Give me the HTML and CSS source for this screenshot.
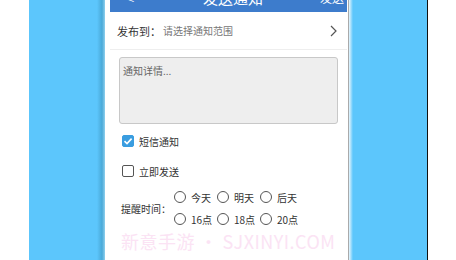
FILE: index.html
```html
<!DOCTYPE html>
<html lang="zh">
<head>
<meta charset="utf-8">
<link rel="stylesheet" href="styles.css">
</head>
<body>
<div class="stage">
  <div class="side-white"></div>
  <div class="band band-left"></div>
  <div class="phone">
    <div class="screen">
      <div class="header">
        <span class="back">&lt;</span>
        <span class="title">发送通知</span>
        <span class="send">发送</span>
      </div>
      <div class="row-to">
        <span class="label">发布到：</span>
        <span class="placeholder">请选择通知范围</span>
        <svg class="chev" width="7" height="12" viewBox="0 0 7 12"><path d="M1 1 L6 6 L1 11" fill="none" stroke="#555" stroke-width="1.2"/></svg>
      </div>
      <div class="body">
        <div class="textarea">通知详情...</div>
        <div class="check-row">
          <span class="cb checked"><svg width="12" height="12" viewBox="0 0 12 12"><path d="M2.5 6.2 L5 8.6 L9.6 3.6" fill="none" stroke="#fff" stroke-width="1.6"/></svg></span>
          <span class="cb-label">短信通知</span>
        </div>
        <div class="check-row second">
          <span class="cb"></span>
          <span class="cb-label">立即发送</span>
        </div>
        <div class="remind">
          <span class="remind-label">提醒时间：</span>
          <div class="radio-grid">
            <span class="radio"><i></i>今天</span>
            <span class="radio"><i></i>明天</span>
            <span class="radio"><i></i>后天</span>
            <span class="radio"><i></i>16点</span>
            <span class="radio"><i></i>18点</span>
            <span class="radio"><i></i>20点</span>
          </div>
        </div>
        <div class="watermark">新意手游 • SJXINYI.COM</div>
      </div>
    </div>
    <div class="edge"></div>
  </div>
  <div class="band band-right"></div>
  <div class="black-line"></div>
  <div class="side-white"></div>
</div>
</body>
</html>
```
FILE: styles.css
```css
html, body { margin: 0; padding: 0; background: #fff; }
body { width: 456px; height: 260px; overflow: hidden; font-family: "Noto Sans CJK SC", "Noto Sans", sans-serif; }
.stage { display: flex; height: 260px; }
.side-white { width: 29px; background: #fff; flex: none; }
.stage > .side-white:last-child { width: 27px; }
.band { background: #5cc6fc; flex: none; }
.band-left { width: 76px; background: linear-gradient(to right, #5cc6fc 0, #5cc6fc 68px, #4aa9d8 73px, #8fd0ee 76px); }
.band-right { width: 78px; background: linear-gradient(to right, #e8f6fd 0, #5cc6fc 4px, #5cc6fc 78px); }
.black-line { width: 1px; background: #111; flex: none; }
.phone { display: flex; flex: none; background: #fff; padding-left: 5px; }
.screen { width: 237px; display: flex; flex-direction: column; background: #fff; }
.edge { width: 1px; margin-left: 1px; background: #aaa; }
.header { height: 12px; overflow: hidden; background: #3d7ccc; display: flex; justify-content: space-between; align-items: flex-start; color: #fff; }
.header span { line-height: 20px; margin-top: -12px; }
.back { font-size: 16px; padding-left: 12px; width: 40px; font-family: "DejaVu Sans", sans-serif; font-weight: 200; }
.title { font-size: 15px; }
.send { font-size: 12px; width: 40px; text-align: right; padding-right: 3px; }
.row-to { height: 37px; display: flex; align-items: center; border-bottom: 1px solid #eee; padding: 0 10px 0 7px; }
.label { font-size: 11px; color: #333; width: 46px; }
.placeholder { font-size: 10px; color: #777; flex: 1; }
.chev { display: block; }
.body { padding: 7px 9px 0 9px; display: flex; flex-direction: column; }
.textarea { background: #eeeeee; border: 1px solid #c8c8c8; border-radius: 3px; font-size: 10px; color: #666; padding: 5px 3px; box-sizing: border-box; height: 67px; }
.check-row { display: flex; align-items: center; margin-top: 11px; padding-left: 3px; height: 12px; }
.check-row.second { margin-top: 18px; }
.cb { width: 12px; height: 12px; box-sizing: border-box; border: 1.5px solid #555; border-radius: 2px; display: block; }
.cb.checked { background: #3a9de0; border-color: #3a9de0; }
.cb.checked svg { display: block; margin: -1.5px; }
.cb-label { font-size: 10px; color: #333; margin-left: 5px; }
.remind { display: flex; align-items: center; margin-top: 14px; }
.remind-label { font-size: 10px; color: #333; width: 53px; padding-left: 2px; }
.radio-grid { display: grid; grid-template-columns: 43px 43px 43px; row-gap: 10px; }
.radio { display: flex; align-items: center; font-size: 10px; color: #333; height: 12px; }
.radio i { display: block; width: 12px; height: 12px; box-sizing: border-box; border: 1.5px solid #555; border-radius: 50%; margin-right: 5px; }
.watermark { font-size: 18px; color: #fbe3f4; margin-top: 3px; padding-left: 2px; letter-spacing: 0.5px; white-space: nowrap; font-family: "Noto Sans CJK SC", "Open Sans", sans-serif; }
```
